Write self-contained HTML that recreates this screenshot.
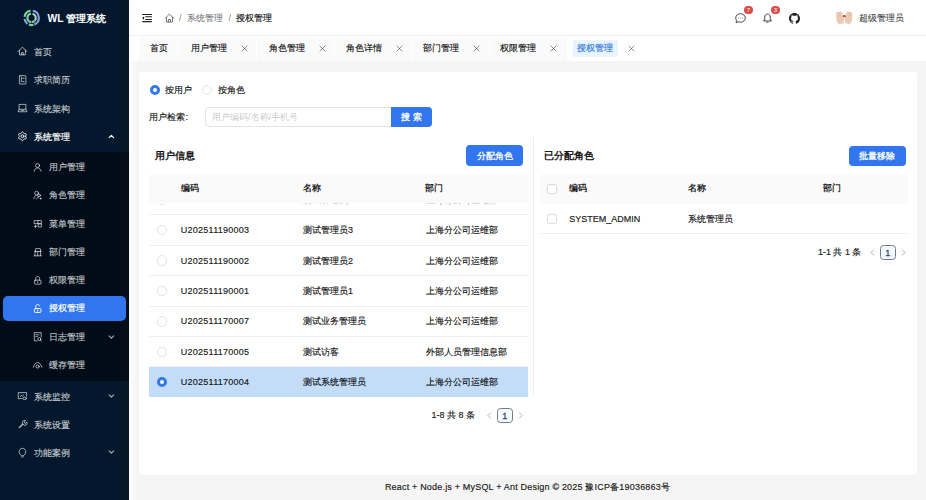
<!DOCTYPE html>
<html><head><meta charset="utf-8">
<style>
*{box-sizing:border-box;margin:0;padding:0}
html,body{width:926px;height:500px;overflow:hidden}
body{position:relative;background:#f5f5f5;font-family:"Liberation Sans",sans-serif;font-size:9px;color:rgba(0,0,0,0.88)}
.a{position:absolute;white-space:nowrap}
.t{line-height:12px;height:12px;-webkit-text-stroke:0.2px currentColor}
.b{font-weight:bold;-webkit-text-stroke:0}
#side{position:absolute;left:0;top:0;width:129px;height:500px;background:#03182d}
#sub{position:absolute;left:0;top:151.5px;width:129px;height:229px;background:#000c17}
.mi{position:absolute;left:0;width:129px;height:26px;color:rgba(255,255,255,0.65);font-size:9px}
.mi .ic{position:absolute;top:8.5px;width:9px;height:9px}
.mi .tx{position:absolute;top:7px;line-height:12px;-webkit-text-stroke:0.2px currentColor}
.mi.l1 .ic{left:18px}.mi.l1 .tx{left:33.5px}
.mi.l2 .ic{left:33.5px}.mi.l2 .tx{left:49px}
.mi .ar{position:absolute;left:108px;top:10px;width:7px;height:5px}
.sel{position:absolute;left:2.6px;width:123.4px;height:25.7px;background:#3176ee;border-radius:5px}
#header{position:absolute;left:129px;top:0;width:797px;height:36px;background:#fff;border-bottom:0.7px solid #f0f0f0}
#tabs{position:absolute;left:129px;top:36px;width:797px;height:24.8px;background:#fff}
.tab{position:absolute;top:1px;height:23.8px;background:#fafafa;border-right:1.2px solid #fff}
.tab .tx{position:absolute;top:5.2px;line-height:12px;font-size:9px;color:rgba(0,0,0,0.88);-webkit-text-stroke:0.2px currentColor}
.tab .x{position:absolute;top:7.8px;width:7px;height:7px}
#card{position:absolute;left:138.8px;top:72px;width:778.2px;height:403.3px;background:#fff;border-radius:3.5px}
.radio{position:absolute;width:10.3px;height:10.3px;border-radius:50%;border:0.7px solid #e3e3e3;background:#fff}
.radio.on{border:3.4px solid #3478e8;background:#fff}
.th{position:absolute;background:#fafafa;height:28.5px}
.rowline{position:absolute;height:0.65px;background:#f0f0f0}
.btn{position:absolute;background:#3176ee;color:#fff;border-radius:4px;text-align:center;font-size:9px;padding-top:0.4px;-webkit-text-stroke:0.3px currentColor}
</style></head><body>
<div id="side">
<svg class="a" style="left:22px;top:8px" width="20" height="20" viewBox="0 0 20 20" fill="none" stroke-width="2.1"><path d="M2.47 8.90 A7.2 7.2 0 0 1 8.60 2.77" stroke="#86d09e"/><path d="M10.85 2.81 A7.2 7.2 0 0 1 12.30 16.58" stroke="#8e9fdc"/><path d="M11.46 16.85 A7.2 7.2 0 0 1 6.90 16.58" stroke="#86d09e"/><path d="M5.57 15.87 A7.2 7.2 0 0 1 2.47 10.90" stroke="#8e9fdc"/><path d="M9.23 14.08 A4.2 4.2 0 0 1 9.02 5.74" stroke="#86d09e"/><path d="M10.47 5.79 A4.2 4.2 0 0 1 12.82 12.60" stroke="#a8d8c0"/><path d="M12.72 12.71 A4.2 4.2 0 0 1 9.75 14.10" stroke="#86d09e"/></svg>
<div class="a b" style="left:47.5px;top:12px;color:#fff;font-size:10.3px;line-height:13px;height:13px">WL 管理系统</div>
<div id="sub"></div>
<div class="a" style="left:119.7px;top:0;width:8.5px;height:500px;background:rgba(20,22,24,0.3)"></div>
<div class="sel" style="top:295.6px"></div>
<div class="mi l1" style="top:39.00px"><svg style="position:absolute;left:14px;top:3.00px" width="18" height="18" viewBox="0 0 18 18" stroke="currentColor" fill="none" stroke-width="0.95" stroke-linecap="round" stroke-linejoin="round"><path d="M4 9.6 L8.45 5.1 L12.9 9.6"/><path d="M5.5 8.2 V12.8 H11.4 V8.2"/><path d="M7.6 12.8 V10.6 H9.3 V12.8"/></svg><span class="tx">首页</span></div>
<div class="mi l1" style="top:67.30px"><svg style="position:absolute;left:14px;top:3.00px" width="18" height="18" viewBox="0 0 18 18" stroke="currentColor" fill="none" stroke-width="0.95" stroke-linecap="round" stroke-linejoin="round"><rect x="5.4" y="5.7" width="6.5" height="8.3" rx="0.6"/><path d="M7.4 7.2 V11.6 H10"/><path d="M8.6 8.3 H10.2"/></svg><span class="tx">求职简历</span></div>
<div class="mi l1" style="top:95.60px"><svg style="position:absolute;left:14px;top:3.00px" width="18" height="18" viewBox="0 0 18 18" stroke="currentColor" fill="none" stroke-width="0.95" stroke-linecap="round" stroke-linejoin="round"><path d="M5.1 10.3 V5.4 H11.9 V10.3"/><path d="M4.2 12.4 L5.1 10.3 H11.9 L12.8 12.4 Z"/><path d="M7.2 11.4 H9.8"/></svg><span class="tx">系统架构</span></div>
<div class="mi l1" style="top:123.90px;color:#fff"><svg style="position:absolute;left:14px;top:3.00px" width="18" height="18" viewBox="0 0 18 18" stroke="currentColor" fill="none" stroke-width="0.95" stroke-linecap="round" stroke-linejoin="round"><path d="M11.55 9.20 L11.62 9.48 L11.82 9.79 L12.07 10.17 L12.28 10.59 L12.36 11.02 L12.26 11.40 L11.98 11.67 L11.57 11.82 L11.10 11.85 L10.65 11.82 L10.28 11.81 L10.00 11.88 L9.80 12.09 L9.62 12.42 L9.42 12.82 L9.16 13.21 L8.83 13.50 L8.45 13.60 L8.07 13.50 L7.74 13.21 L7.48 12.82 L7.28 12.42 L7.10 12.09 L6.90 11.88 L6.62 11.81 L6.25 11.82 L5.80 11.85 L5.33 11.82 L4.92 11.67 L4.64 11.40 L4.54 11.02 L4.62 10.59 L4.83 10.17 L5.08 9.79 L5.28 9.48 L5.35 9.20 L5.28 8.92 L5.08 8.61 L4.83 8.23 L4.62 7.81 L4.54 7.38 L4.64 7.00 L4.92 6.73 L5.33 6.58 L5.80 6.55 L6.25 6.58 L6.62 6.59 L6.90 6.52 L7.10 6.31 L7.28 5.98 L7.48 5.58 L7.74 5.19 L8.07 4.90 L8.45 4.80 L8.83 4.90 L9.16 5.19 L9.42 5.58 L9.62 5.98 L9.80 6.31 L10.00 6.52 L10.28 6.59 L10.65 6.58 L11.10 6.55 L11.57 6.58 L11.98 6.73 L12.26 7.00 L12.36 7.38 L12.28 7.81 L12.07 8.23 L11.82 8.61 L11.62 8.92 L11.55 9.20Z"/><circle cx="8.45" cy="9.2" r="1.45"/></svg><span class="tx">系统管理</span><svg style="position:absolute;left:102px;top:3.00px" width="18" height="18" viewBox="0 0 18 18" stroke="currentColor" fill="none" stroke-width="1.15" stroke-linecap="round" stroke-linejoin="round"><path d="M7.2 10.6 L9.4 8.4 L11.6 10.6"/></svg></div>
<div class="mi l2" style="top:153.90px"><svg style="position:absolute;left:29px;top:3.90px" width="18" height="18" viewBox="0 0 18 18" stroke="currentColor" fill="none" stroke-width="0.95" stroke-linecap="round" stroke-linejoin="round"><circle cx="8.6" cy="7.5" r="2"/><path d="M5.2 13.2 C5.6 11 6.9 10 8.6 10 C10.3 10 11.6 11 12 13.2"/></svg><span class="tx">用户管理</span></div>
<div class="mi l2" style="top:182.20px"><svg style="position:absolute;left:29px;top:3.90px" width="18" height="18" viewBox="0 0 18 18" stroke="currentColor" fill="none" stroke-width="0.95" stroke-linecap="round" stroke-linejoin="round"><circle cx="7.6" cy="7.2" r="1.9"/><circle cx="10" cy="9.4" r="1.4"/><path d="M5 12.4 C5.3 10.7 6.1 9.6 7.3 9.3"/><path d="M7.5 12.9 C7.9 11.8 8.6 11.1 9.6 11"/><circle cx="11.6" cy="12.6" r="0.5" fill="currentColor"/></svg><span class="tx">角色管理</span></div>
<div class="mi l2" style="top:210.50px"><svg style="position:absolute;left:29px;top:3.90px" width="18" height="18" viewBox="0 0 18 18" stroke="currentColor" fill="none" stroke-width="0.95" stroke-linecap="round" stroke-linejoin="round"><path d="M5.5 6.6 H12.4 V9.6 H5.5 Z M8.9 6.6 V9.6"/><rect x="9.6" y="9.9" width="2.8" height="3.1"/><path d="M5.3 12.3 H7.7 M6.5 11.1 V13.5"/></svg><span class="tx">菜单管理</span></div>
<div class="mi l2" style="top:238.80px"><svg style="position:absolute;left:29px;top:3.90px" width="18" height="18" viewBox="0 0 18 18" stroke="currentColor" fill="none" stroke-width="0.95" stroke-linecap="round" stroke-linejoin="round"><path d="M6.5 8.4 V6.1 C6.5 5.8 6.7 5.6 7 5.6 H11 C11.3 5.6 11.5 5.8 11.5 6.1 V8.4"/><path d="M5.3 8.4 H12.2"/><path d="M5.7 12.8 L6.3 8.4 M8.7 12.8 V8.4 M11.8 12.8 L11.2 8.4"/><path d="M5.2 12.8 H12.3"/></svg><span class="tx">部门管理</span></div>
<div class="mi l2" style="top:267.10px"><svg style="position:absolute;left:29px;top:3.90px" width="18" height="18" viewBox="0 0 18 18" stroke="currentColor" fill="none" stroke-width="0.95" stroke-linecap="round" stroke-linejoin="round"><rect x="5.4" y="9.2" width="6.6" height="4" rx="0.8"/><path d="M6.8 9.2 V7.4 C6.8 6.2 7.6 5.5 8.7 5.5 C9.8 5.5 10.6 6.2 10.6 7.4 V9.2"/><path d="M8.7 10.6 V11.7"/></svg><span class="tx">权限管理</span></div>
<div class="mi l2" style="top:295.40px;color:#fff"><svg style="position:absolute;left:29px;top:3.90px" width="18" height="18" viewBox="0 0 18 18" stroke="currentColor" fill="none" stroke-width="0.95" stroke-linecap="round" stroke-linejoin="round"><rect x="5.4" y="9.6" width="6.6" height="3.8" rx="0.8"/><path d="M6.8 9.6 V7.4 C6.8 6.2 7.6 5.5 8.7 5.5 C9.7 5.5 10.4 6 10.6 6.8"/><path d="M8.7 11 V12"/></svg><span class="tx">授权管理</span></div>
<div class="mi l2" style="top:323.70px"><svg style="position:absolute;left:29px;top:3.90px" width="18" height="18" viewBox="0 0 18 18" stroke="currentColor" fill="none" stroke-width="0.95" stroke-linecap="round" stroke-linejoin="round"><path d="M12.2 9 V4.6 H5.3 V12.8 H8.2"/><path d="M6.8 6.8 H10 M6.8 8.6 H8.5"/><circle cx="10.3" cy="11.1" r="1.5"/><path d="M11.4 12.2 L12.5 13.3"/></svg><span class="tx">日志管理</span><svg style="position:absolute;left:102px;top:3.90px" width="18" height="18" viewBox="0 0 18 18" stroke="currentColor" fill="none" stroke-width="1.15" stroke-linecap="round" stroke-linejoin="round"><path d="M7.1 7.9 L9.4 10.1 L11.7 7.9"/></svg></div>
<div class="mi l2" style="top:352.00px"><svg style="position:absolute;left:29px;top:3.90px" width="18" height="18" viewBox="0 0 18 18" stroke="currentColor" fill="none" stroke-width="0.95" stroke-linecap="round" stroke-linejoin="round"><path d="M4.4 11.2 C5.4 8.1 6.9 6.5 8.6 6.5 C10.3 6.5 11.8 8.1 12.8 11.2"/><circle cx="8.6" cy="10.5" r="1.6"/></svg><span class="tx">缓存管理</span></div>
<div class="mi l1" style="top:383.50px"><svg style="position:absolute;left:14px;top:3.10px" width="18" height="18" viewBox="0 0 18 18" stroke="currentColor" fill="none" stroke-width="0.95" stroke-linecap="round" stroke-linejoin="round"><path d="M8 11.6 H4.3 V5.6 H12.6 V9.2"/><path d="M6.2 9.7 L7.4 8.4 L8.4 9.2 L9.8 7.9"/><ellipse cx="10.7" cy="11.4" rx="1.9" ry="1.2"/></svg><span class="tx">系统监控</span><svg style="position:absolute;left:102px;top:3.10px" width="18" height="18" viewBox="0 0 18 18" stroke="currentColor" fill="none" stroke-width="1.15" stroke-linecap="round" stroke-linejoin="round"><path d="M7.1 7.9 L9.4 10.1 L11.7 7.9"/></svg></div>
<div class="mi l1" style="top:411.90px"><svg style="position:absolute;left:14px;top:3.10px" width="18" height="18" viewBox="0 0 18 18" stroke="currentColor" fill="none" stroke-width="0.95" stroke-linecap="round" stroke-linejoin="round"><path d="M5.4 12.5 L8.7 9.2" stroke-width="1.6"/><path d="M8.4 8.4 C8 7.2 8.6 5.8 10 5.5 C10.6 5.4 11.1 5.5 11.5 5.7 L10.2 7 L10.6 8 L11.6 8.4 L12.9 7.1 C13.1 7.5 13.2 8 13.1 8.6 C12.8 10 11.4 10.6 10.2 10.2 Z"/></svg><span class="tx">系统设置</span></div>
<div class="mi l1" style="top:440.20px"><svg style="position:absolute;left:14px;top:3.10px" width="18" height="18" viewBox="0 0 18 18" stroke="currentColor" fill="none" stroke-width="0.95" stroke-linecap="round" stroke-linejoin="round"><path d="M7.2 12.4 C5.9 11.5 5.2 10.3 5.2 8.7 C5.2 6.8 6.6 5.3 8.45 5.3 C10.3 5.3 11.7 6.8 11.7 8.7 C11.7 10.3 11 11.5 9.7 12.4 Z"/><path d="M7.5 13.9 H9.4"/></svg><span class="tx">功能案例</span><svg style="position:absolute;left:102px;top:3.10px" width="18" height="18" viewBox="0 0 18 18" stroke="currentColor" fill="none" stroke-width="1.15" stroke-linecap="round" stroke-linejoin="round"><path d="M7.1 7.9 L9.4 10.1 L11.7 7.9"/></svg></div>
</div>
<div id="header">
<svg class="a" style="left:9px;top:8px" width="40" height="20" viewBox="138 8 40 20"><g stroke="#1f1f1f" stroke-width="1.05" stroke-linecap="round"><path d="M142.6 14.5 H151.5 M145.6 16.7 H151.5 M145.6 19.4 H151.5 M142.6 21.6 H151.5"/></g><ellipse cx="143.4" cy="18.1" rx="0.85" ry="1.3" fill="#1f1f1f"/><g stroke="#707070" fill="none" stroke-width="0.95" stroke-linejoin="round" stroke-linecap="round"><path d="M165.4 18.3 L169.3 14.1 L173.9 18.3"/><path d="M166.5 17.3 V22 H172.5 V17.3"/><path d="M168.4 22 V19.5 H170.5 V22"/></g></svg>
<span class="a t" style="left:50px;top:12px;color:rgba(0,0,0,0.45)">/</span>
<span class="a t" style="left:57.5px;top:12px;color:rgba(0,0,0,0.45)">系统管理</span>
<span class="a t" style="left:99.5px;top:12px;color:rgba(0,0,0,0.45)">/</span>
<span class="a t" style="left:106.5px;top:12px;color:rgba(0,0,0,0.88)">授权管理</span>
<svg class="a" style="left:605.5px;top:12.8px" width="11" height="10.5" viewBox="0 0 22 21" stroke="#333" fill="none" stroke-width="1.8"><path d="M11 1.5 C16.5 1.5 20.5 5.3 20.5 10 C20.5 14.7 16.5 18.5 11 18.5 C9.3 18.5 7.8 18.1 6.5 17.5 L2 19 L3.3 15.3 C2.2 13.8 1.5 12 1.5 10 C1.5 5.3 5.5 1.5 11 1.5 Z"/><circle cx="7" cy="10" r="0.9" fill="#333" stroke="none"/><circle cx="11" cy="10" r="0.9" fill="#333" stroke="none"/><circle cx="15" cy="10" r="0.9" fill="#333" stroke="none"/></svg>
<div class="a" style="left:615.3px;top:5.8px;width:8.3px;height:8.5px;border-radius:50%;background:#dc4b48;color:#fff;font-size:6.2px;line-height:8.3px;height:8.3px;text-align:center;box-shadow:0 0 0 0.8px #fff">7</div>
<svg class="a" style="left:634px;top:12.8px" width="9" height="10.5" viewBox="0 0 18 21" stroke="#333" fill="none" stroke-width="1.8" stroke-linejoin="round"><path d="M9 2 C5.5 2 3.5 4.8 3.5 8 V14.5 H1.5 V16 H16.5 V14.5 H14.5 V8 C14.5 4.8 12.5 2 9 2 Z"/><path d="M7 18.5 H11"/></svg>
<div class="a" style="left:642.3px;top:5.8px;width:8.3px;height:8.5px;border-radius:50%;background:#dc4b48;color:#fff;font-size:6.2px;line-height:8.3px;height:8.3px;text-align:center;box-shadow:0 0 0 0.8px #fff">3</div>
<svg class="a" style="left:660px;top:12.8px" width="11" height="11" viewBox="0 0 16 16" fill="#222"><path d="M8 0C3.58 0 0 3.58 0 8c0 3.54 2.29 6.53 5.47 7.59.4.07.55-.17.55-.38 0-.19-.01-.82-.01-1.49-2.01.37-2.53-.49-2.69-.94-.09-.23-.48-.94-.82-1.13-.28-.15-.68-.52-.01-.53.63-.01 1.08.58 1.23.82.72 1.21 1.87.87 2.33.66.07-.52.28-.87.51-1.07-1.78-.2-3.64-.89-3.64-3.95 0-.87.31-1.59.82-2.15-.08-.2-.36-1.02.08-2.12 0 0 .67-.21 2.2.82.64-.18 1.32-.27 2-.27.68 0 1.36.09 2 .27 1.53-1.04 2.2-.82 2.2-.82.44 1.1.16 1.92.08 2.12.51.56.82 1.27.82 2.15 0 3.07-1.87 3.75-3.65 3.95.29.25.54.73.54 1.48 0 1.07-.01 1.93-.01 2.2 0 .21.15.46.55.38A8.013 8.013 0 0016 8c0-4.42-3.58-8-8-8z"/></svg>
<svg class="a" style="left:705px;top:9px" width="26" height="18" viewBox="834 9 26 18">
<path d="M836.3 14 C836.3 11.8 838 11.2 839.2 12.3 C840 11 842 11.3 842.3 13.5 L844 17.5 C844.5 19.5 844.2 22.5 842.5 23.5 C840.5 24.5 837.5 24 836.8 21.5 C836.2 19.5 836.3 16.5 836.3 14 Z" fill="#ecc9b3"/>
<path d="M852.2 14 C852.2 11.8 850.5 11.2 849.3 12.3 C848.5 11 846.5 11.3 846.2 13.5 L845 17.5 C844.5 19.5 844.8 22.5 846.5 23.5 C848.5 24.5 851 24 851.7 21.5 C852.3 19.5 852.2 16.5 852.2 14 Z" fill="#ecc9b3"/>
<path d="M839.2 12.3 V16 M849.3 12.3 V16" stroke="#dcb39c" stroke-width="0.5" fill="none"/>
<ellipse cx="844.4" cy="16.2" rx="1.6" ry="1.1" fill="#9a5a4a"/>
</svg>
<span class="a t" style="left:730px;top:12px;color:rgba(0,0,0,0.65)">超级管理员</span>
</div>
<div id="tabs">
<div class="tab" style="left:10.0px;width:39.4px;background:#fafafa"><span class="tx" style="left:10.8px">首页</span></div>
<div class="tab" style="left:49.4px;width:78.6px;background:#fafafa"><span class="tx" style="left:12.6px">用户管理</span><svg class="x" style="left:63.1px" viewBox="0 0 10 10" stroke="rgba(0,0,0,0.5)" stroke-width="1.25" stroke-linecap="round"><path d="M1.3 1.3 L8.7 8.7 M8.7 1.3 L1.3 8.7"/></svg></div>
<div class="tab" style="left:128.0px;width:78.0px;background:#fafafa"><span class="tx" style="left:11.5px">角色管理</span><svg class="x" style="left:61.5px" viewBox="0 0 10 10" stroke="rgba(0,0,0,0.5)" stroke-width="1.25" stroke-linecap="round"><path d="M1.3 1.3 L8.7 8.7 M8.7 1.3 L1.3 8.7"/></svg></div>
<div class="tab" style="left:206.0px;width:77.5px;background:#fafafa"><span class="tx" style="left:10.5px">角色详情</span><svg class="x" style="left:60.5px" viewBox="0 0 10 10" stroke="rgba(0,0,0,0.5)" stroke-width="1.25" stroke-linecap="round"><path d="M1.3 1.3 L8.7 8.7 M8.7 1.3 L1.3 8.7"/></svg></div>
<div class="tab" style="left:283.5px;width:77.5px;background:#fafafa"><span class="tx" style="left:10.5px">部门管理</span><svg class="x" style="left:60.5px" viewBox="0 0 10 10" stroke="rgba(0,0,0,0.5)" stroke-width="1.25" stroke-linecap="round"><path d="M1.3 1.3 L8.7 8.7 M8.7 1.3 L1.3 8.7"/></svg></div>
<div class="tab" style="left:361.0px;width:77.6px;background:#fafafa"><span class="tx" style="left:10.0px">权限管理</span><svg class="x" style="left:60.0px" viewBox="0 0 10 10" stroke="rgba(0,0,0,0.5)" stroke-width="1.25" stroke-linecap="round"><path d="M1.3 1.3 L8.7 8.7 M8.7 1.3 L1.3 8.7"/></svg></div>
<div class="tab" style="left:438.6px;width:72.4px;background:#fff"><div class="a" style="left:5.9px;top:3px;width:45px;height:16.8px;background:#e9f4ff;border-radius:2px"></div><span class="tx" style="left:9.4px;color:#3b7fd8">授权管理</span><svg class="x" style="left:60.4px" viewBox="0 0 10 10" stroke="rgba(0,0,0,0.5)" stroke-width="1.25" stroke-linecap="round"><path d="M1.3 1.3 L8.7 8.7 M8.7 1.3 L1.3 8.7"/></svg></div>
</div>
<div class="a" style="left:129px;top:60.8px;width:9px;height:440px;background:linear-gradient(to right,#fcfcfd,#f5f5f5)"></div>
<div id="card"></div>
<div id="content"><div class="radio on" style="left:149.5px;top:84.6px"></div>
<span class="a t " style="left:165px;top:83.70px;">按用户</span>
<div class="radio" style="left:201.6px;top:84.6px"></div>
<span class="a t " style="left:217.5px;top:83.70px;">按角色</span>
<span class="a t " style="left:149.4px;top:111.20px;">用户检索:</span>
<div class="a" style="left:204.5px;top:106.8px;width:187px;height:20.4px;border:0.7px solid #e3e3e3;border-radius:4px 0 0 4px;background:#fff"></div>
<span class="a t " style="left:212px;top:111.00px;color:rgba(0,0,0,0.25);-webkit-text-stroke:0">用户编码/名称/手机号</span>
<div class="btn" style="left:390.8px;top:106.8px;width:41px;height:20.4px;border-radius:0 4px 4px 0;line-height:20.4px">搜 索</div>
<div class="a" style="left:533px;top:136.5px;width:0.7px;height:257px;background:#ececec"></div>
<span class="a t " style="left:155px;top:149.60px;font-size:10.4px;-webkit-text-stroke:0.45px currentColor">用户信息</span>
<div class="btn" style="left:466px;top:145.4px;width:57px;height:20.4px;line-height:20.4px">分配角色</div>
<div class="a" style="left:0;top:0;width:926px;height:500px;overflow:hidden;clip-path:inset(203.7px 0 0 0)"><div class="rowline" style="left:149px;top:214.35px;width:379px"></div><div class="radio" style="left:157.2px;top:194.65px"></div><span class="a t" style="left:180.8px;top:193.80px;letter-spacing:0.25px">U202511190004</span><span class="a t" style="left:303px;top:193.80px;">测试管理员4</span><span class="a t" style="left:425.5px;top:193.80px;">上海分公司运维部</span><div class="rowline" style="left:149px;top:244.75px;width:379px"></div><div class="radio" style="left:157.2px;top:225.05px"></div><span class="a t" style="left:180.8px;top:224.20px;letter-spacing:0.25px">U202511190003</span><span class="a t" style="left:303px;top:224.20px;">测试管理员3</span><span class="a t" style="left:425.5px;top:224.20px;">上海分公司运维部</span><div class="rowline" style="left:149px;top:275.15px;width:379px"></div><div class="radio" style="left:157.2px;top:255.45px"></div><span class="a t" style="left:180.8px;top:254.60px;letter-spacing:0.25px">U202511190002</span><span class="a t" style="left:303px;top:254.60px;">测试管理员2</span><span class="a t" style="left:425.5px;top:254.60px;">上海分公司运维部</span><div class="rowline" style="left:149px;top:305.55px;width:379px"></div><div class="radio" style="left:157.2px;top:285.85px"></div><span class="a t" style="left:180.8px;top:285.00px;letter-spacing:0.25px">U202511190001</span><span class="a t" style="left:303px;top:285.00px;">测试管理员1</span><span class="a t" style="left:425.5px;top:285.00px;">上海分公司运维部</span><div class="rowline" style="left:149px;top:335.95px;width:379px"></div><div class="radio" style="left:157.2px;top:316.25px"></div><span class="a t" style="left:180.8px;top:315.40px;letter-spacing:0.25px">U202511170007</span><span class="a t" style="left:303px;top:315.40px;">测试业务管理员</span><span class="a t" style="left:425.5px;top:315.40px;">上海分公司运维部</span><div class="rowline" style="left:149px;top:366.35px;width:379px"></div><div class="radio" style="left:157.2px;top:346.65px"></div><span class="a t" style="left:180.8px;top:345.80px;letter-spacing:0.25px">U202511170005</span><span class="a t" style="left:303px;top:345.80px;">测试访客</span><span class="a t" style="left:425.5px;top:345.80px;">外部人员管理信息部</span><div class="a" style="left:149px;top:367.00px;width:379px;height:30.4px;background:#c3ddf9"></div><div class="radio on" style="left:157.2px;top:377.05px"></div><span class="a t" style="left:180.8px;top:376.20px;letter-spacing:0.25px">U202511170004</span><span class="a t" style="left:303px;top:376.20px;">测试系统管理员</span><span class="a t" style="left:425.5px;top:376.20px;">上海分公司运维部</span></div>
<div class="th" style="left:149px;top:174px;width:379px;border-radius:4px 4px 0 0"></div>
<span class="a t b" style="left:180.8px;top:182.20px;">编码</span>
<span class="a t b" style="left:303px;top:182.20px;">名称</span>
<span class="a t b" style="left:425.3px;top:182.20px;">部门</span>
<span class="a t " style="left:431.6px;top:409.20px;">1-8 共 8 条</span>
<svg class="a" style="left:486.5px;top:411.7px" width="5" height="7" viewBox="0 0 5 7" stroke="rgba(0,0,0,0.3)" fill="none" stroke-width="1"><path d="M4 0.5 L1 3.5 L4 6.5"/></svg>
<div class="a" style="left:497px;top:407.59999999999997px;width:15.5px;height:15.3px;border:0.85px solid #6d7c92;border-radius:3.5px;color:#2f4a70;background:#f7faff;text-align:center;line-height:14.5px;-webkit-text-stroke:0.3px currentColor">1</div>
<svg class="a" style="left:518px;top:411.7px" width="5" height="7" viewBox="0 0 5 7" stroke="rgba(0,0,0,0.3)" fill="none" stroke-width="1"><path d="M1 0.5 L4 3.5 L1 6.5"/></svg>
<span class="a t " style="left:544.3px;top:149.60px;font-size:10.3px;-webkit-text-stroke:0.45px currentColor">已分配角色</span>
<div class="btn" style="left:849.2px;top:145.6px;width:56.6px;height:20.2px;line-height:20.2px">批量移除</div>
<div class="th" style="left:539.7px;top:174px;width:368px;height:29.5px;border-radius:4px 4px 0 0"></div>
<div class="a" style="left:546.8px;top:183.6px;width:10.2px;height:10.2px;border:0.65px solid #d9d9d9;border-radius:2.5px;background:#fff"></div>
<span class="a t b" style="left:569.3px;top:182.20px;">编码</span>
<span class="a t b" style="left:688px;top:182.20px;">名称</span>
<span class="a t b" style="left:822.6px;top:182.20px;">部门</span>
<div class="a" style="left:546.8px;top:213.5px;width:10.2px;height:10.2px;border:0.65px solid #d9d9d9;border-radius:2.5px;background:#fff"></div>
<span class="a t " style="left:569.3px;top:212.70px;">SYSTEM_ADMIN</span>
<span class="a t " style="left:688px;top:212.70px;">系统管理员</span>
<div class="rowline" style="left:539.7px;top:233.3px;width:368px"></div>
<span class="a t " style="left:817.9px;top:246.20px;">1-1 共 1 条</span>
<svg class="a" style="left:869.5px;top:248.7px" width="5" height="7" viewBox="0 0 5 7" stroke="rgba(0,0,0,0.3)" fill="none" stroke-width="1"><path d="M4 0.5 L1 3.5 L4 6.5"/></svg>
<div class="a" style="left:880px;top:244.6px;width:15.5px;height:15.3px;border:0.85px solid #6d7c92;border-radius:3.5px;color:#2f4a70;background:#f7faff;text-align:center;line-height:14.5px;-webkit-text-stroke:0.3px currentColor">1</div>
<svg class="a" style="left:901px;top:248.7px" width="5" height="7" viewBox="0 0 5 7" stroke="rgba(0,0,0,0.3)" fill="none" stroke-width="1"><path d="M1 0.5 L4 3.5 L1 6.5"/></svg></div>
<div class="a" style="left:129px;top:481px;width:797px;text-align:center;line-height:13px;font-size:9px;color:rgba(0,0,0,0.88);letter-spacing:0.19px;-webkit-text-stroke:0.2px currentColor">React + Node.js + MySQL + Ant Design © 2025 豫ICP备19036863号</div>
</body></html>
